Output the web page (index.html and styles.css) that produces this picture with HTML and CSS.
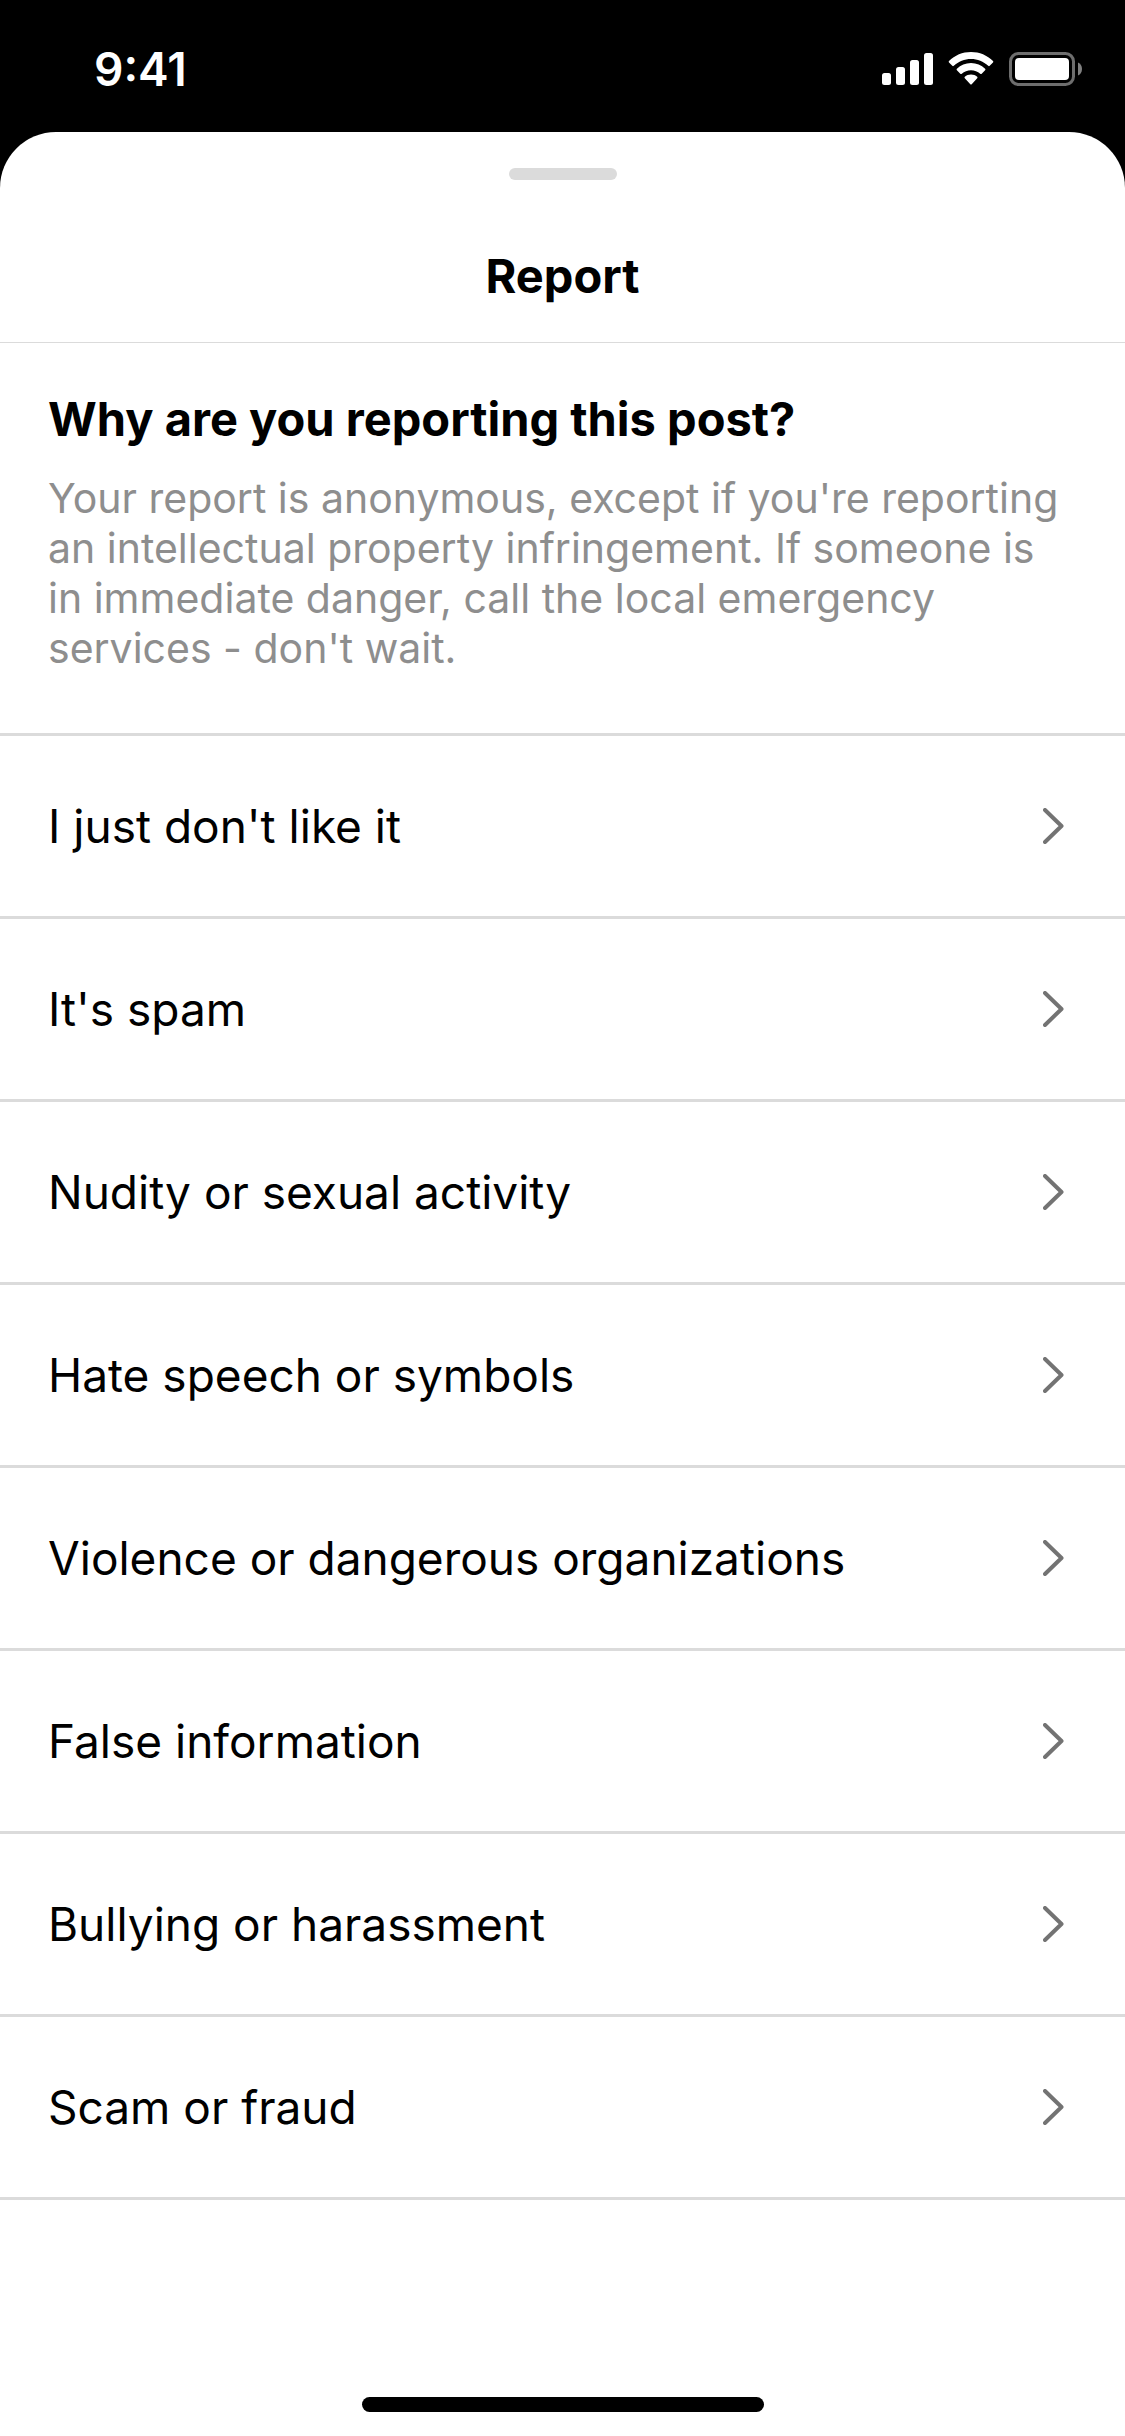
FILE: index.html
```html
<!DOCTYPE html>
<html lang="en">
<head>
    <meta charset="UTF-8">
    <meta name="viewport" content="width=device-width, initial-scale=1.0">
    <title>Report</title>
    <link rel="stylesheet" href="styles.css">
</head>
<body>
    <div class="status-bar">
        <div class="time">9:41</div>
        <div class="status-icons">
            <svg width="51" height="34" viewBox="0 0 51 34" fill="#fff" aria-hidden="true">
                <rect x="0" y="21" width="9" height="12" rx="2.5"/>
                <rect x="14" y="15" width="9" height="18" rx="2.5"/>
                <rect x="28" y="8" width="9" height="25" rx="2.5"/>
                <rect x="42" y="1" width="9" height="32" rx="2.5"/>
            </svg>
            <svg width="46" height="34" viewBox="0 0 46 34" fill="#fff" aria-hidden="true">
                <path d="M23 0C31.500 0 39.300 3.300 45 9Q45.700 9.700 45 10.500L41.700 13.800Q41 14.500 40.200 13.800C35.500 9.400 29.500 7 23 7C16.500 7 10.500 9.400 5.800 13.800Q5 14.500 4.300 13.800L1 10.500Q.3 9.700 1 9C6.700 3.300 14.500 0 23 0Z"/>
                <path d="M23 11C28.500 11 33.300 13.100 37.100 16.700Q37.900 17.500 37.100 18.300L33.700 21.700Q33 22.400 32.200 21.700C29.700 19.500 26.500 18.200 23 18.200C19.500 18.200 16.300 19.500 13.800 21.700Q13 22.400 12.300 21.700L8.900 18.300Q8.100 17.500 8.900 16.700C12.700 13.100 17.500 11 23 11Z"/>
                <path d="M23 22.500C25.500 22.500 27.500 23.400 29.200 24.800Q29.900 25.500 29.200 26.200L23.700 32.200Q23 32.900 22.300 32.200L16.800 26.200Q16.100 25.500 16.800 24.800C18.500 23.400 20.500 22.500 23 22.500Z"/>
            </svg>
            <svg width="73" height="34" viewBox="0 0 73 34" aria-hidden="true">
                <rect x="1.500" y="1.500" width="63" height="31" rx="8" fill="none" stroke="#6e6e6e" stroke-width="3"/>
                <rect x="6" y="6" width="54" height="22" rx="4" fill="#fff"/>
                <path d="M69 10.500C71.500 11.500 73 14 73 17C73 20 71.500 22.500 69 23.500Z" fill="#808080"/>
            </svg>
        </div>
    </div>

    <main class="sheet">
        <header class="sheet-header">
            <div class="grabber"></div>
            <h1>Report</h1>
        </header>

        <section class="intro">
            <h2>Why are you reporting this post?</h2>
            <p>Your report is anonymous, except if you're reporting an intellectual property infringement. If someone is in immediate danger, call the local emergency services - don't wait.</p>
        </section>

        <ul class="reasons">
            <li>
                <button class="reason" type="button">
                    I just don't like it
                    <svg class="chevron" viewBox="0 0 21 36" aria-hidden="true"><path d="M2 2L18.500 18L2 34"/></svg>
                </button>
            </li>
            <li>
                <button class="reason" type="button">
                    It's spam
                    <svg class="chevron" viewBox="0 0 21 36" aria-hidden="true"><path d="M2 2L18.500 18L2 34"/></svg>
                </button>
            </li>
            <li>
                <button class="reason" type="button">
                    Nudity or sexual activity
                    <svg class="chevron" viewBox="0 0 21 36" aria-hidden="true"><path d="M2 2L18.500 18L2 34"/></svg>
                </button>
            </li>
            <li>
                <button class="reason" type="button">
                    Hate speech or symbols
                    <svg class="chevron" viewBox="0 0 21 36" aria-hidden="true"><path d="M2 2L18.500 18L2 34"/></svg>
                </button>
            </li>
            <li>
                <button class="reason" type="button">
                    Violence or dangerous organizations
                    <svg class="chevron" viewBox="0 0 21 36" aria-hidden="true"><path d="M2 2L18.500 18L2 34"/></svg>
                </button>
            </li>
            <li>
                <button class="reason" type="button">
                    False information
                    <svg class="chevron" viewBox="0 0 21 36" aria-hidden="true"><path d="M2 2L18.500 18L2 34"/></svg>
                </button>
            </li>
            <li>
                <button class="reason" type="button">
                    Bullying or harassment
                    <svg class="chevron" viewBox="0 0 21 36" aria-hidden="true"><path d="M2 2L18.500 18L2 34"/></svg>
                </button>
            </li>
            <li>
                <button class="reason" type="button">
                    Scam or fraud
                    <svg class="chevron" viewBox="0 0 21 36" aria-hidden="true"><path d="M2 2L18.500 18L2 34"/></svg>
                </button>
            </li>
        </ul>

        <div class="home-indicator"></div>
    </main>
</body>
</html>
```
FILE: styles.css
```css
* {
    box-sizing: border-box;
}

body {
    display: flex;
    flex-direction: column;
    min-height: 100vh;
    margin: 0;
    background-color: #000;
    color: #000;
    font-family: Inter, "Liberation Sans", sans-serif;
}

h1, h2, p, ul {
    margin: 0;
    padding: 0;
}

.status-bar {
    display: flex;
    justify-content: space-between;
    align-items: center;
    padding: 41px 43px 35px 94px;
    color: #fff;
}

.time {
    font-size: 46px;
    font-weight: 600;
    line-height: 56px;
}

.status-icons {
    display: flex;
    align-items: center;
    gap: 15px;
}

.sheet {
    display: flex;
    flex-direction: column;
    flex: 1;
    padding-bottom: 24px;
    background-color: #fff;
    border-radius: 56px 56px 0 0;
}

.sheet-header {
    padding: 36px 48px;
    border-bottom: 1px solid #dbdbdb;
    text-align: center;
}

.grabber {
    width: 108px;
    height: 12px;
    margin: 0 auto 66px;
    border-radius: 6px;
    background-color: #dbdbdb;
}

h1, h2 {
    font-size: 47px;
    font-weight: 700;
    line-height: 60px;
}

.intro {
    padding: 46px 48px 60px;
}

.intro p {
    margin-top: 24px;
    color: #8e8e8e;
    font-size: 41px;
    line-height: 50px;
}

.reasons {
    border-top: 3px solid #dbdbdb;
    list-style: none;
}

.reasons li {
    border-bottom: 3px solid #dbdbdb;
}

.reason {
    display: flex;
    justify-content: space-between;
    align-items: center;
    width: 100%;
    padding: 60px 61px 60px 48px;
    border: 0;
    background: none;
    color: inherit;
    font-family: inherit;
    font-size: 46px;
    line-height: 60px;
    text-align: left;
    cursor: pointer;
}

.chevron {
    width: 21px;
    height: 36px;
    fill: none;
    stroke: #737373;
    stroke-width: 4;
    stroke-linecap: round;
    stroke-linejoin: round;
}

.home-indicator {
    width: 402px;
    height: 15px;
    margin: auto auto 0;
    border-radius: 8px;
    background-color: #000;
}
```
